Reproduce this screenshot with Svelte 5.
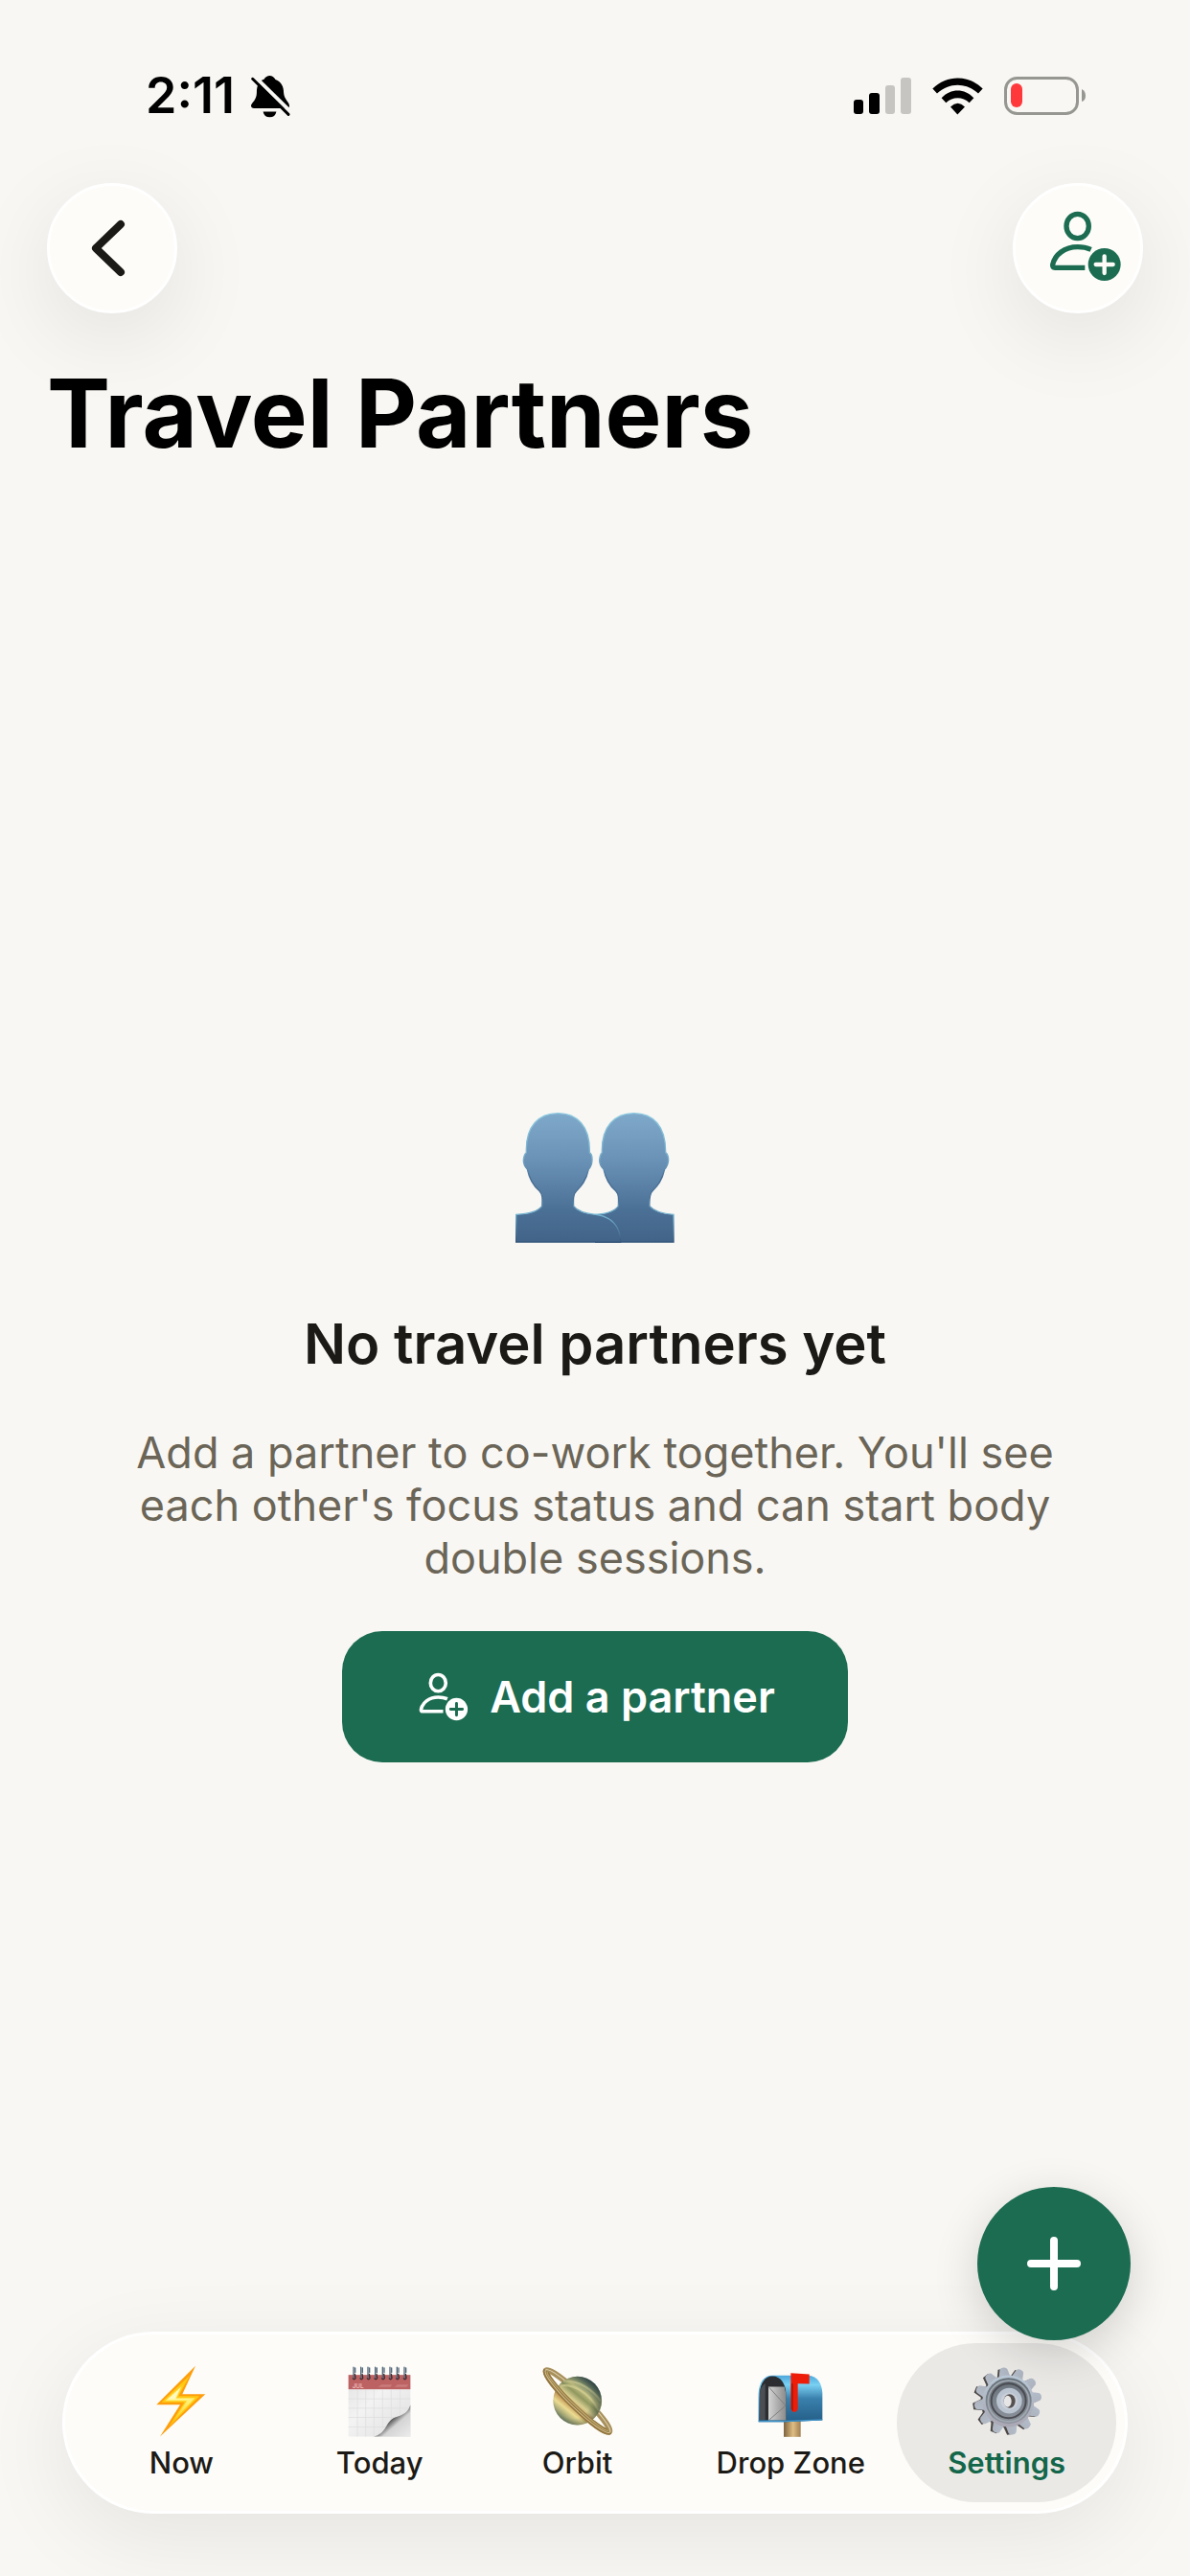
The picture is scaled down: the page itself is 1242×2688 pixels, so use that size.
<script>
  // --- Tab bar ---
  const tabs = [
    { id: 'now', label: 'Now' },
    { id: 'today', label: 'Today' },
    { id: 'orbit', label: 'Orbit' },
    { id: 'drop', label: 'Drop Zone' },
    { id: 'settings', label: 'Settings' },
  ];
  let activeTab = $state('settings');

  // Angles of the gear teeth, in degrees
  const teeth = Array.from({ length: 12 }, (_, i) => i * 30 - 8);
  const rings = [966, 989, 1011, 1034, 1057, 1080, 1102, 1125];
</script>

{#snippet personAdd()}
  <svg class="person-add" viewBox="225 150 228 222" aria-hidden="true">
    <g fill="none" stroke="currentColor" stroke-width="16">
      <ellipse cx="314" cy="198" rx="35" ry="38" />
      <path d="M337 328H243Q235 328 236 319C242 287 274 263 314 263Q338 263 356 271" />
    </g>
    <circle cx="398" cy="318" r="51" fill="currentColor" />
    <path class="mark" d="M398 292V345M371 318H425" />
  </svg>
{/snippet}

{#snippet tabIcon(id)}
  {#if id === 'now'}
    <svg class="tab-icon" viewBox="310 148 228 224" aria-hidden="true">
      <defs>
        <linearGradient id="bolt" x1="0" y1="0" x2="0" y2="1">
          <stop offset="0" stop-color="#ffc400" />
          <stop offset="0.5" stop-color="#fff27a" />
          <stop offset="1" stop-color="#ffcf1f" />
        </linearGradient>
      </defs>
      <path d="M469 150L347 271H421L358 371L500 238H428Z" fill="#ff9d0a" />
      <path d="M452 178L362 264H434L386 340L482 244H416Z" fill="#ffc914" />
      <path d="M436 200L374 259H442L402 319L468 250H409Z" fill="url(#bolt)" />
      <path d="M424 216L382 255H446L462 253H406Z" fill="#fffbc0" />
    </svg>
  {:else if id === 'today'}
    <svg class="tab-icon" viewBox="931 148 228 224" aria-hidden="true">
      <defs>
        <linearGradient id="page" x1="0" y1="0" x2="1" y2="1">
          <stop offset="0" stop-color="#e2e2e2" />
          <stop offset="0.4" stop-color="#f3f3f3" />
          <stop offset="1" stop-color="#dedede" />
        </linearGradient>
        <linearGradient id="curl" x1="0" y1="0" x2="1" y2="1">
          <stop offset="0.3" stop-color="#efefef" />
          <stop offset="0.48" stop-color="#5c5c5c" />
          <stop offset="0.62" stop-color="#d4d4d4" />
          <stop offset="1" stop-color="#ececec" />
        </linearGradient>
      </defs>
      <rect x="948" y="178" width="194" height="193" fill="url(#page)" />
      <path d="M976 224V371M1002 224V371M1028 224V371M1055 224V345M1082 224V325M1110 224V305M948 253H1142M948 282H1142M948 311H1090M948 341H1065" stroke="#dcdcdc" stroke-width="2" fill="none" />
      <path d="M1028 371C1070 360 1064 322 1094 311C1120 303 1134 296 1142 272V371Z" fill="url(#curl)" />
      <rect x="948" y="178" width="194" height="45" fill="#bd6262" />
      <text x="960" y="219" font-size="19" font-weight="600" fill="#ebbcbc">JUL</text>
      <path d="M1040 216L1052 208H1084L1080 216ZM1092 216L1102 208H1136L1130 216Z" fill="#c97b7b" />
      {#each rings as x}
        <path d="M{x - 2} 154V190M{x + 3} 156V170" stroke="#53677a" stroke-width="4" stroke-linecap="round" />
        <path d="M{x - 5} 188Q{x} 196 {x + 4} 188L{x + 2} 174" stroke="#3b2b30" stroke-width="4" fill="none" />
      {/each}
    </svg>
  {:else if id === 'orbit'}
    <svg class="tab-icon" viewBox="203 148 228 224" aria-hidden="true">
      <defs>
        <linearGradient id="planet" x1="0.85" y1="0.1" x2="0.2" y2="0.9">
          <stop offset="0" stop-color="#2c4450" />
          <stop offset="0.18" stop-color="#7d8d6c" />
          <stop offset="0.32" stop-color="#b9b87c" />
          <stop offset="0.42" stop-color="#90985f" />
          <stop offset="0.55" stop-color="#d9cf91" />
          <stop offset="0.66" stop-color="#c59a58" />
          <stop offset="0.78" stop-color="#ecdc92" />
          <stop offset="1" stop-color="#6d7e62" />
        </linearGradient>
        <radialGradient id="planetShade" cx="0.4" cy="0.5" r="0.6">
          <stop offset="0.6" stop-color="#20302c" stop-opacity="0" />
          <stop offset="1" stop-color="#20302c" stop-opacity="0.5" />
        </radialGradient>
      </defs>
      <g transform="rotate(44 317 260)" fill="none">
        <ellipse cx="317" cy="260" rx="138" ry="20" stroke="#a8905c" stroke-width="18" />
        <ellipse cx="317" cy="260" rx="140" ry="22" stroke="#e2d6b4" stroke-width="3" />
      </g>
      <circle cx="316" cy="259" r="76" fill="url(#planet)" />
      <path d="M262 212C300 206 350 228 384 292M272 198C320 194 362 222 391 262" fill="none" stroke="#e3dca0" stroke-width="7" opacity="0.5" />
      <circle cx="316" cy="259" r="76" fill="url(#planetShade)" />
      <!-- near half of the ring, in front of the planet -->
      <g transform="rotate(44 317 260)" fill="none">
        <path d="M179 260A138 20 0 0 0 455 260" stroke="#94773f" stroke-width="18" />
        <path d="M177 260A140 23 0 0 0 457 260" stroke="#d9c79a" stroke-width="3" />
        <path d="M185 260A132 16 0 0 0 449 260" stroke="#bba66e" stroke-width="4" />
      </g>
    </svg>
  {:else if id === 'drop'}
    <svg class="tab-icon" viewBox="871 148 228 224" aria-hidden="true">
      <defs>
        <linearGradient id="box" x1="0" y1="0" x2="0" y2="1">
          <stop offset="0" stop-color="#4fa8dc" />
          <stop offset="0.2" stop-color="#79d0f3" />
          <stop offset="0.5" stop-color="#3a80ad" />
          <stop offset="1" stop-color="#245e87" />
        </linearGradient>
        <linearGradient id="post" x1="0" y1="0" x2="1" y2="0">
          <stop offset="0" stop-color="#7d623f" />
          <stop offset="0.55" stop-color="#dfbd82" />
          <stop offset="1" stop-color="#a07f51" />
        </linearGradient>
        <linearGradient id="letter" x1="0" y1="0" x2="1" y2="0">
          <stop offset="0" stop-color="#d4d4d4" />
          <stop offset="1" stop-color="#8b8b8b" />
        </linearGradient>
      </defs>
      <rect x="964" y="318" width="53" height="54" fill="url(#post)" />
      <path d="M928 180H1040C1070 182 1084 206 1085 236V320L972 325H885V236C886 202 902 180 928 180Z" fill="url(#box)" />
      <path d="M889 319V236C890 203 906 182 929 182C954 182 970 206 971 236V319Z" fill="#2b2d30" />
      <path d="M889 319V236C890 222 896 212 906 204V319Z" fill="#4b4f54" />
      <path d="M916 215H966L971 236V320H916Z" fill="url(#letter)" />
      <path d="M918 217L970 274L918 319" fill="none" stroke="#7f7f7f" stroke-width="3" />
      <path d="M885 323H972L1085 318" fill="none" stroke="#3d92c8" stroke-width="4" />
      <path d="M986 172L1044 176V206L1008 205V283Q1006 294 997 294Q988 294 987 283Z" fill="#ed1d0a" />
      <path d="M987 205H994V291Q988 289 987 283Z" fill="#bd1606" />
    </svg>
  {:else}
    <svg class="tab-icon" viewBox="336 628 228 224" aria-hidden="true">
      <defs>
        <linearGradient id="steel" gradientUnits="userSpaceOnUse" x1="450" y1="632" x2="450" y2="850">
          <stop offset="0" stop-color="#bfd0de" />
          <stop offset="0.55" stop-color="#aeb5c1" />
          <stop offset="1" stop-color="#a9a1ad" />
        </linearGradient>
        <linearGradient id="hollow" x1="0" y1="0" x2="0" y2="1">
          <stop offset="0" stop-color="#667078" />
          <stop offset="1" stop-color="#8f949e" />
        </linearGradient>
      </defs>
      <g fill="#4d4845">
        {#each teeth as angle}
          <path d="M522 722L555 730V750L522 760Z" transform="translate(-6 2) rotate({angle} 452 740)" />
        {/each}
        <circle cx="447" cy="742" r="80" />
      </g>
      <g fill="url(#steel)">
        {#each teeth as angle}
          <path d="M520 720L553 728Q559 731 559 740Q559 749 553 752L520 760Z" transform="rotate({angle} 453 740)" />
        {/each}
        <circle cx="454" cy="740" r="81" />
      </g>
      <circle cx="455" cy="739" r="72" fill="url(#hollow)" />
      <circle cx="455" cy="740" r="64" fill="none" stroke="#a0a8b0" stroke-width="5" />
      <circle cx="455" cy="739" r="54" fill="none" stroke="#4b4c52" stroke-width="6" />
      <circle cx="457" cy="739" r="40" fill="#bac3d0" />
      <circle cx="457" cy="740" r="27" fill="#c9d0da" />
      <ellipse cx="458" cy="740" rx="18" ry="22" fill="#56504f" />
      <ellipse cx="452" cy="741" rx="12" ry="18" fill="#e6e6e6" />
    </svg>
  {/if}
{/snippet}

<div class="screen">
  <header>
    <div class="status">
      <div class="status-left">
        <span class="time">2:11</span>
        <svg class="bell" viewBox="392 54 128 136" aria-label="Silent mode">
          <path d="M453 57Q464 57 471 69C490 76 497 92 497 110C498 132 515 140 515 152Q514 160 506 160H404Q394 160 394 151C396 142 412 134 412 110C412 88 418 74 435 68Q442 57 453 57Z" />
          <path d="M432 170H474Q470 188 453 188T432 170Z" />
          <path d="M404 58L524 176" stroke="#f8f7f3" stroke-width="12" />
          <path d="M399 67L512 179" stroke="#000" stroke-width="9" stroke-linecap="round" />
        </svg>
      </div>
      <div class="status-right">
        <svg class="signal" viewBox="0 0 60 38" aria-label="Signal">
          <rect x="0" y="23" width="10" height="15" rx="3" />
          <rect x="16" y="16" width="11" height="22" rx="3" />
          <rect x="33" y="8" width="10" height="30" rx="3" fill="#c6c5c2" />
          <rect x="49" y="0" width="11" height="38" rx="3" fill="#c6c5c2" />
        </svg>
        <svg class="wifi" viewBox="309 62 159 116" aria-label="Wi-Fi">
          <path d="M310 96C355 52 422 52 467 96L453 111C415 76 362 76 324 111Z" />
          <path d="M338 125C367 94 410 94 439 125L425 140C404 120 373 120 352 140Z" />
          <path d="M366 153Q389 131 411 153L388 177Z" />
        </svg>
        <svg class="battery" viewBox="0 0 86 40" aria-label="Battery low">
          <rect x="1.5" y="1.5" width="75" height="37" rx="12" fill="none" stroke="#979792" stroke-width="3" />
          <rect x="7" y="7" width="12" height="25" rx="6" fill="#ff383c" />
          <path d="M81 13Q85 15 85 20T81 26Z" fill="#979792" />
        </svg>
      </div>
    </div>

    <div class="toolbar">
      <button class="round" aria-label="Back">
        <svg class="chevron" viewBox="0 0 36 60" aria-hidden="true">
          <path d="M31 5L5 30L31 55" />
        </svg>
      </button>
      <button class="round green" aria-label="Add partner">{@render personAdd()}</button>
    </div>

    <h1>Travel Partners</h1>
  </header>

  <main>
    <svg class="people" viewBox="106 90 504 414" aria-hidden="true">
      <defs>
        <linearGradient id="body" gradientUnits="userSpaceOnUse" x1="0" y1="93" x2="0" y2="500">
          <stop offset="0" stop-color="#7fa9ca" />
          <stop offset="0.35" stop-color="#6b93b7" />
          <stop offset="0.75" stop-color="#4b7096" />
          <stop offset="1" stop-color="#426388" />
        </linearGradient>
        <linearGradient id="edge" gradientUnits="userSpaceOnUse" x1="0" y1="93" x2="0" y2="500">
          <stop offset="0" stop-color="#8ecbe2" />
          <stop offset="0.35" stop-color="#79b0cd" />
          <stop offset="0.5" stop-color="#466b93" />
          <stop offset="0.66" stop-color="#4a7197" />
          <stop offset="0.78" stop-color="#79b9d4" />
          <stop offset="1" stop-color="#35557a" />
        </linearGradient>
      </defs>
      <g fill="url(#body)" stroke="url(#edge)" stroke-width="4">
        <path d="M480 95C540 95 580 135 579 218Q588 224 588 242Q586 260 576 270C568 306 554 322 538 338C528 348 528 366 529 386C545 404 575 410 604 412V498H360V412C390 410 418 404 431 386C432 362 433 348 423 338C404 322 392 303 385 270Q372 258 372 242Q373 224 380 218C378 135 420 95 480 95Z" />
        <path d="M242 95C302 95 343 135 341 218Q350 224 349 242Q348 260 338 270C330 306 316 322 300 338C289 348 290 366 291 386C305 404 330 409 360 412C410 418 438 450 438 498H111V412C150 410 178 404 192 386C194 362 194 348 184 338C165 322 153 303 146 270Q134 258 134 242Q135 224 143 218C140 135 182 95 242 95Z" />
      </g>
    </svg>
    <h2>No travel partners yet</h2>
    <p>Add a partner to co-work together. You'll see each other's focus status and can start body double sessions.</p>
    <button class="primary">{@render personAdd()}Add a partner</button>
  </main>

  <footer>
    <nav aria-label="Main">
      {#each tabs as tab}
        <button
          class="tab"
          class:active={activeTab === tab.id}
          aria-current={activeTab === tab.id ? 'page' : undefined}
          onclick={() => (activeTab = tab.id)}
        >
          {@render tabIcon(tab.id)}
          <span>{tab.label}</span>
        </button>
      {/each}
    </nav>
    <button class="fab" aria-label="Add">
      <svg viewBox="0 0 56 56" aria-hidden="true"><path d="M28 4V52M4 28H52" /></svg>
    </button>
  </footer>
</div>

<style>
  :global(body) {
    background: #f8f7f3;
  }

  .screen {
    display: flex;
    flex-direction: column;
    min-height: 100vh;
    box-sizing: border-box;
    overflow: hidden;
    font-family: Inter, "Liberation Sans", sans-serif;
    color: #1c1a16;
  }

  button {
    display: flex;
    align-items: center;
    justify-content: center;
    margin: 0;
    padding: 0;
    border: 0;
    background: none;
    color: inherit;
    font: inherit;
    cursor: pointer;
  }

  svg {
    display: block;
    flex: none;
  }

  header {
    padding: 68px 49px 0;
  }

  /* --- Status bar --- */
  .status {
    display: flex;
    justify-content: space-between;
    align-items: center;
    height: 64px;
    padding: 0 59px 0 103px;
    color: #000;
  }

  .status-left,
  .status-right {
    display: flex;
    align-items: center;
  }

  .status-left {
    gap: 16px;
  }

  .status-right {
    gap: 22px;
  }

  .time {
    font-size: 52px;
    font-weight: 600;
    line-height: 64px;
  }

  .bell {
    width: 43px;
    height: 45px;
  }

  .signal {
    width: 60px;
    height: 38px;
  }

  .wifi {
    width: 53px;
    height: 39px;
  }

  .battery {
    width: 86px;
    height: 40px;
  }

  /* --- Toolbar --- */
  .toolbar {
    display: flex;
    justify-content: space-between;
    margin-top: 59px;
  }

  .round {
    width: 136px;
    height: 136px;
    box-sizing: border-box;
    border: 3px solid #fff;
    border-radius: 50%;
    background: #fdfcf8;
    box-shadow: 0 24px 90px rgba(0, 0, 0, 0.09);
  }

  .green {
    color: #1c6c52;
  }

  .chevron {
    width: 36px;
    height: 60px;
    margin-right: 8px;
  }

  .chevron path {
    fill: none;
    stroke: #1c1a16;
    stroke-width: 8;
    stroke-linecap: round;
    stroke-linejoin: round;
  }

  .person-add {
    width: 76px;
    height: 74px;
  }

  .green .person-add {
    margin: 0 -16px 4px 0;
  }

  .mark {
    fill: none;
    stroke: #fdfcf8;
    stroke-width: 13;
    stroke-linecap: round;
  }

  h1 {
    margin: 42px 0 0;
    color: #000;
    font-size: 99px;
    font-weight: 700;
    line-height: 124px;
  }

  /* --- Empty state --- */
  main {
    flex: 1;
    display: flex;
    flex-direction: column;
    align-items: center;
    justify-content: center;
    padding: 72px 132px 0;
    text-align: center;
  }

  .people {
    width: 168px;
    height: 138px;
  }

  h2 {
    margin: 66px 0 0;
    font-size: 58px;
    font-weight: 600;
    line-height: 76px;
  }

  p {
    max-width: 978px;
    margin: 48px 0 0;
    color: #6b6558;
    font-size: 45px;
    line-height: 55px;
  }

  .primary {
    gap: 22px;
    height: 137px;
    margin-top: 49px;
    padding: 0 76px 0 80px;
    border-radius: 42px;
    background: #1c6c52;
    color: #fff;
    font-size: 45px;
    font-weight: 600;
  }

  .primary .person-add {
    width: 52px;
    height: 51px;
  }

  .primary .mark {
    stroke: #1c6c52;
  }

  /* --- Tab bar --- */
  footer {
    position: relative;
    padding: 0 65px 65px;
  }

  nav {
    display: grid;
    grid-template-columns: 225fr 189fr 224fr 222fr 229fr;
    height: 190px;
    box-sizing: border-box;
    padding: 9px;
    border: 3px solid #fff;
    border-radius: 95px;
    background: #fdfcf8;
    box-shadow: 0 24px 90px rgba(0, 0, 0, 0.08);
  }

  .tab {
    flex-direction: column;
    gap: 9px;
    border-radius: 83px;
    font-size: 31px;
    font-weight: 500;
    line-height: 36px;
    white-space: nowrap;
  }

  .tab.active {
    background: #eae9e6;
    color: #14664a;
    font-weight: 600;
  }

  .tab-icon {
    width: 76px;
    height: 75px;
  }

  /* floats over the right end of the tab bar */
  .fab {
    position: absolute;
    right: 62px;
    bottom: 246px;
    width: 160px;
    height: 160px;
    border-radius: 50%;
    background: #1c6c52;
    box-shadow: 0 12px 48px rgba(0, 0, 0, 0.16);
  }

  .fab svg {
    width: 56px;
    height: 56px;
  }

  .fab path {
    stroke: #fff;
    stroke-width: 8;
    stroke-linecap: round;
  }
</style>
